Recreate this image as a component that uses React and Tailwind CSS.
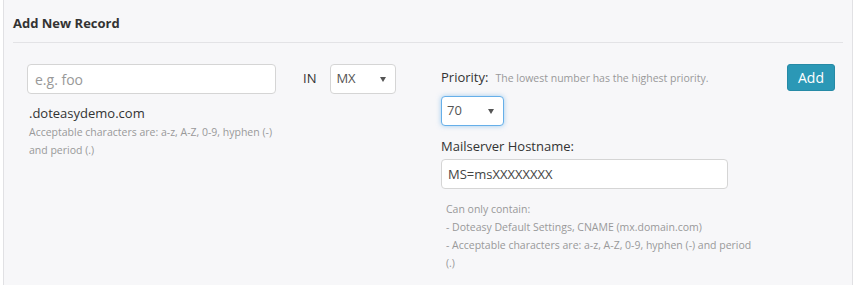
import React from 'react';

const Caret = () => (
    <svg width="6" height="5" viewBox="0 0 6 5" className="shrink-0">
        <path d="M0 0 L6 0 L3 5 Z" fill="#555" />
    </svg>
);

const SelectBox = ({ value, width, focused }) => (
    <div
        className={`flex items-center justify-between h-[30px] ${width} pl-[5px] pr-[9px] bg-white rounded-[4px] text-[13px] text-[#555] ${focused
            ? 'border border-[#66afe9] shadow-[0_0_5px_rgba(102,175,233,0.6)]'
            : 'border border-[#d5d5d5]'
            }`}
    >
        <span>{value}</span>
        <Caret />
    </div>
);

export default function App() {
    return (
        <div className="w-[857px] h-[290px] bg-white" style={{ fontFamily: '"Open Sans", "Liberation Sans", sans-serif' }}>
            <div className="ml-[3px] w-[850px] h-[285px] bg-[#f7f7f9] border-l border-r border-[#e1e1e4] px-[9px]">
                {/* Header */}
                <div className="pt-[14px] pb-[9px] border-b border-[#e3e3e6]">
                    <h2 className="text-[13px] leading-[19px] font-bold text-[#333]">Add New Record</h2>
                </div>

                <div className="flex pt-[21px]">
                    {/* Left: host + type */}
                    <div className="w-[428px] pl-[14px]">
                        <div className="flex items-center">
                            <input
                                type="text"
                                placeholder="e.g. foo"
                                className="w-[249px] h-[30px] px-[7px] bg-white border border-[#d5d5d5] rounded-[4px] text-[14px] text-[#555] placeholder:text-[#999] outline-none"
                            />
                            <span className="ml-[27px] text-[13px] text-[#333]">IN</span>
                            <div className="ml-[14px]">
                                <SelectBox value="MX" width="w-[66px]" />
                            </div>
                        </div>
                        <div className="pl-[2px] pt-[9px]">
                            <div className="text-[13px] leading-[20px] text-[#333]">.doteasydemo.com</div>
                            <div className="text-[10.5px] leading-[18px] text-[#999] w-[262px]">
                                Acceptable characters are: a-z, A-Z, 0-9, hyphen (-) and period (.)
                            </div>
                        </div>
                    </div>

                    {/* Right: priority + hostname */}
                    <div className="flex-1 flex justify-between pr-[8px]">
                        <div>
                            <div className="flex items-baseline pt-[3px] h-[32px]">
                                <span className="text-[13px] leading-[20px] text-[#333]">Priority:</span>
                                <span className="ml-[7px] text-[10.5px] text-[#999]">The lowest number has the highest priority.</span>
                            </div>
                            <SelectBox value="70" width="w-[63px]" focused />
                            <div className="pt-[10px] text-[13px] leading-[20px] text-[#333]">Mailserver Hostname:</div>
                            <input
                                type="text"
                                defaultValue="MS=msXXXXXXXX"
                                className="mt-[3px] w-[287px] h-[30px] px-[6px] bg-white border border-[#d5d5d5] rounded-[4px] text-[13px] text-[#444] outline-none"
                            />
                            <div className="pl-[5px] pt-[11px] text-[10.5px] leading-[18px] text-[#999] w-[312px]">
                                <div>Can only contain:</div>
                                <div>- Doteasy Default Settings, CNAME (mx.domain.com)</div>
                                <div>- Acceptable characters are: a-z, A-Z, 0-9, hyphen (-) and period (.)</div>
                            </div>
                        </div>
                        <div>
                            <button className="h-[27px] px-[10px] bg-[#2b98b6] rounded-[3px] text-[14px] text-white border border-[#268aa6]">
                                Add
                            </button>
                        </div>
                    </div>
                </div>
            </div>
        </div>
    );
}
